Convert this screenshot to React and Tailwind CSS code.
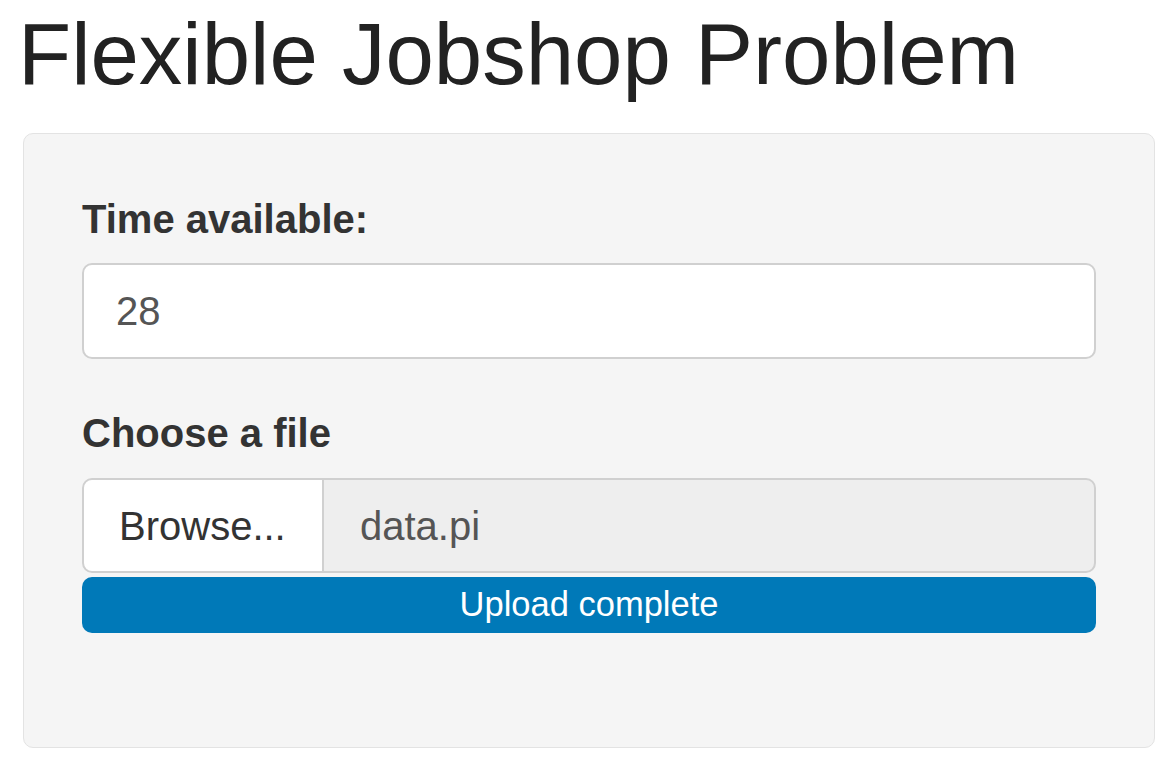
import React from 'react';

const font = { fontFamily: '"Liberation Sans", Arial, sans-serif' };

export default function App() {
  return (
    <div className="w-[1175px] h-[771px] bg-white overflow-hidden text-[#333]" style={font}>
      {/* Titre */}
      <h1 className="ml-[18px] mt-[10px] text-[87px] leading-none font-normal text-[#222]">
        Flexible Jobshop Problem
      </h1>

      {/* Panneau */}
      <div className="ml-[23px] mt-[36px] w-[1132px] h-[615px] bg-[#f5f5f5] border border-[#e3e3e3] rounded-[10px] px-[58px] pt-[65px]">
        <label className="block text-[40px] leading-none font-bold text-[#333]">Time available:</label>
        <div className="mt-[24px] h-[96px] bg-white border-2 border-[#d0d0d0] rounded-[10px] flex items-center pl-[32px] text-[40px] text-[#555]">
          28
        </div>

        <label className="block mt-[54px] text-[40px] leading-none font-bold text-[#333]">Choose a file</label>
        <div className="mt-[25px] h-[95px] flex">
          <div className="w-[241px] h-full bg-white border-2 border-r border-[#d0d0d0] rounded-l-[10px] flex items-center pl-[35px] text-[40px] text-[#333]">
            Browse...
          </div>
          <div className="flex-1 h-full bg-[#eeeeee] border-2 border-l border-[#d0d0d0] rounded-r-[10px] flex items-center pl-[36px] text-[40px] text-[#555]">
            data.pi
          </div>
        </div>
        <div className="mt-[4px] h-[56px] bg-[#0079b8] rounded-[10px] flex items-center justify-center text-[34.5px] text-white">
          Upload complete
        </div>
      </div>
    </div>
  );
}
